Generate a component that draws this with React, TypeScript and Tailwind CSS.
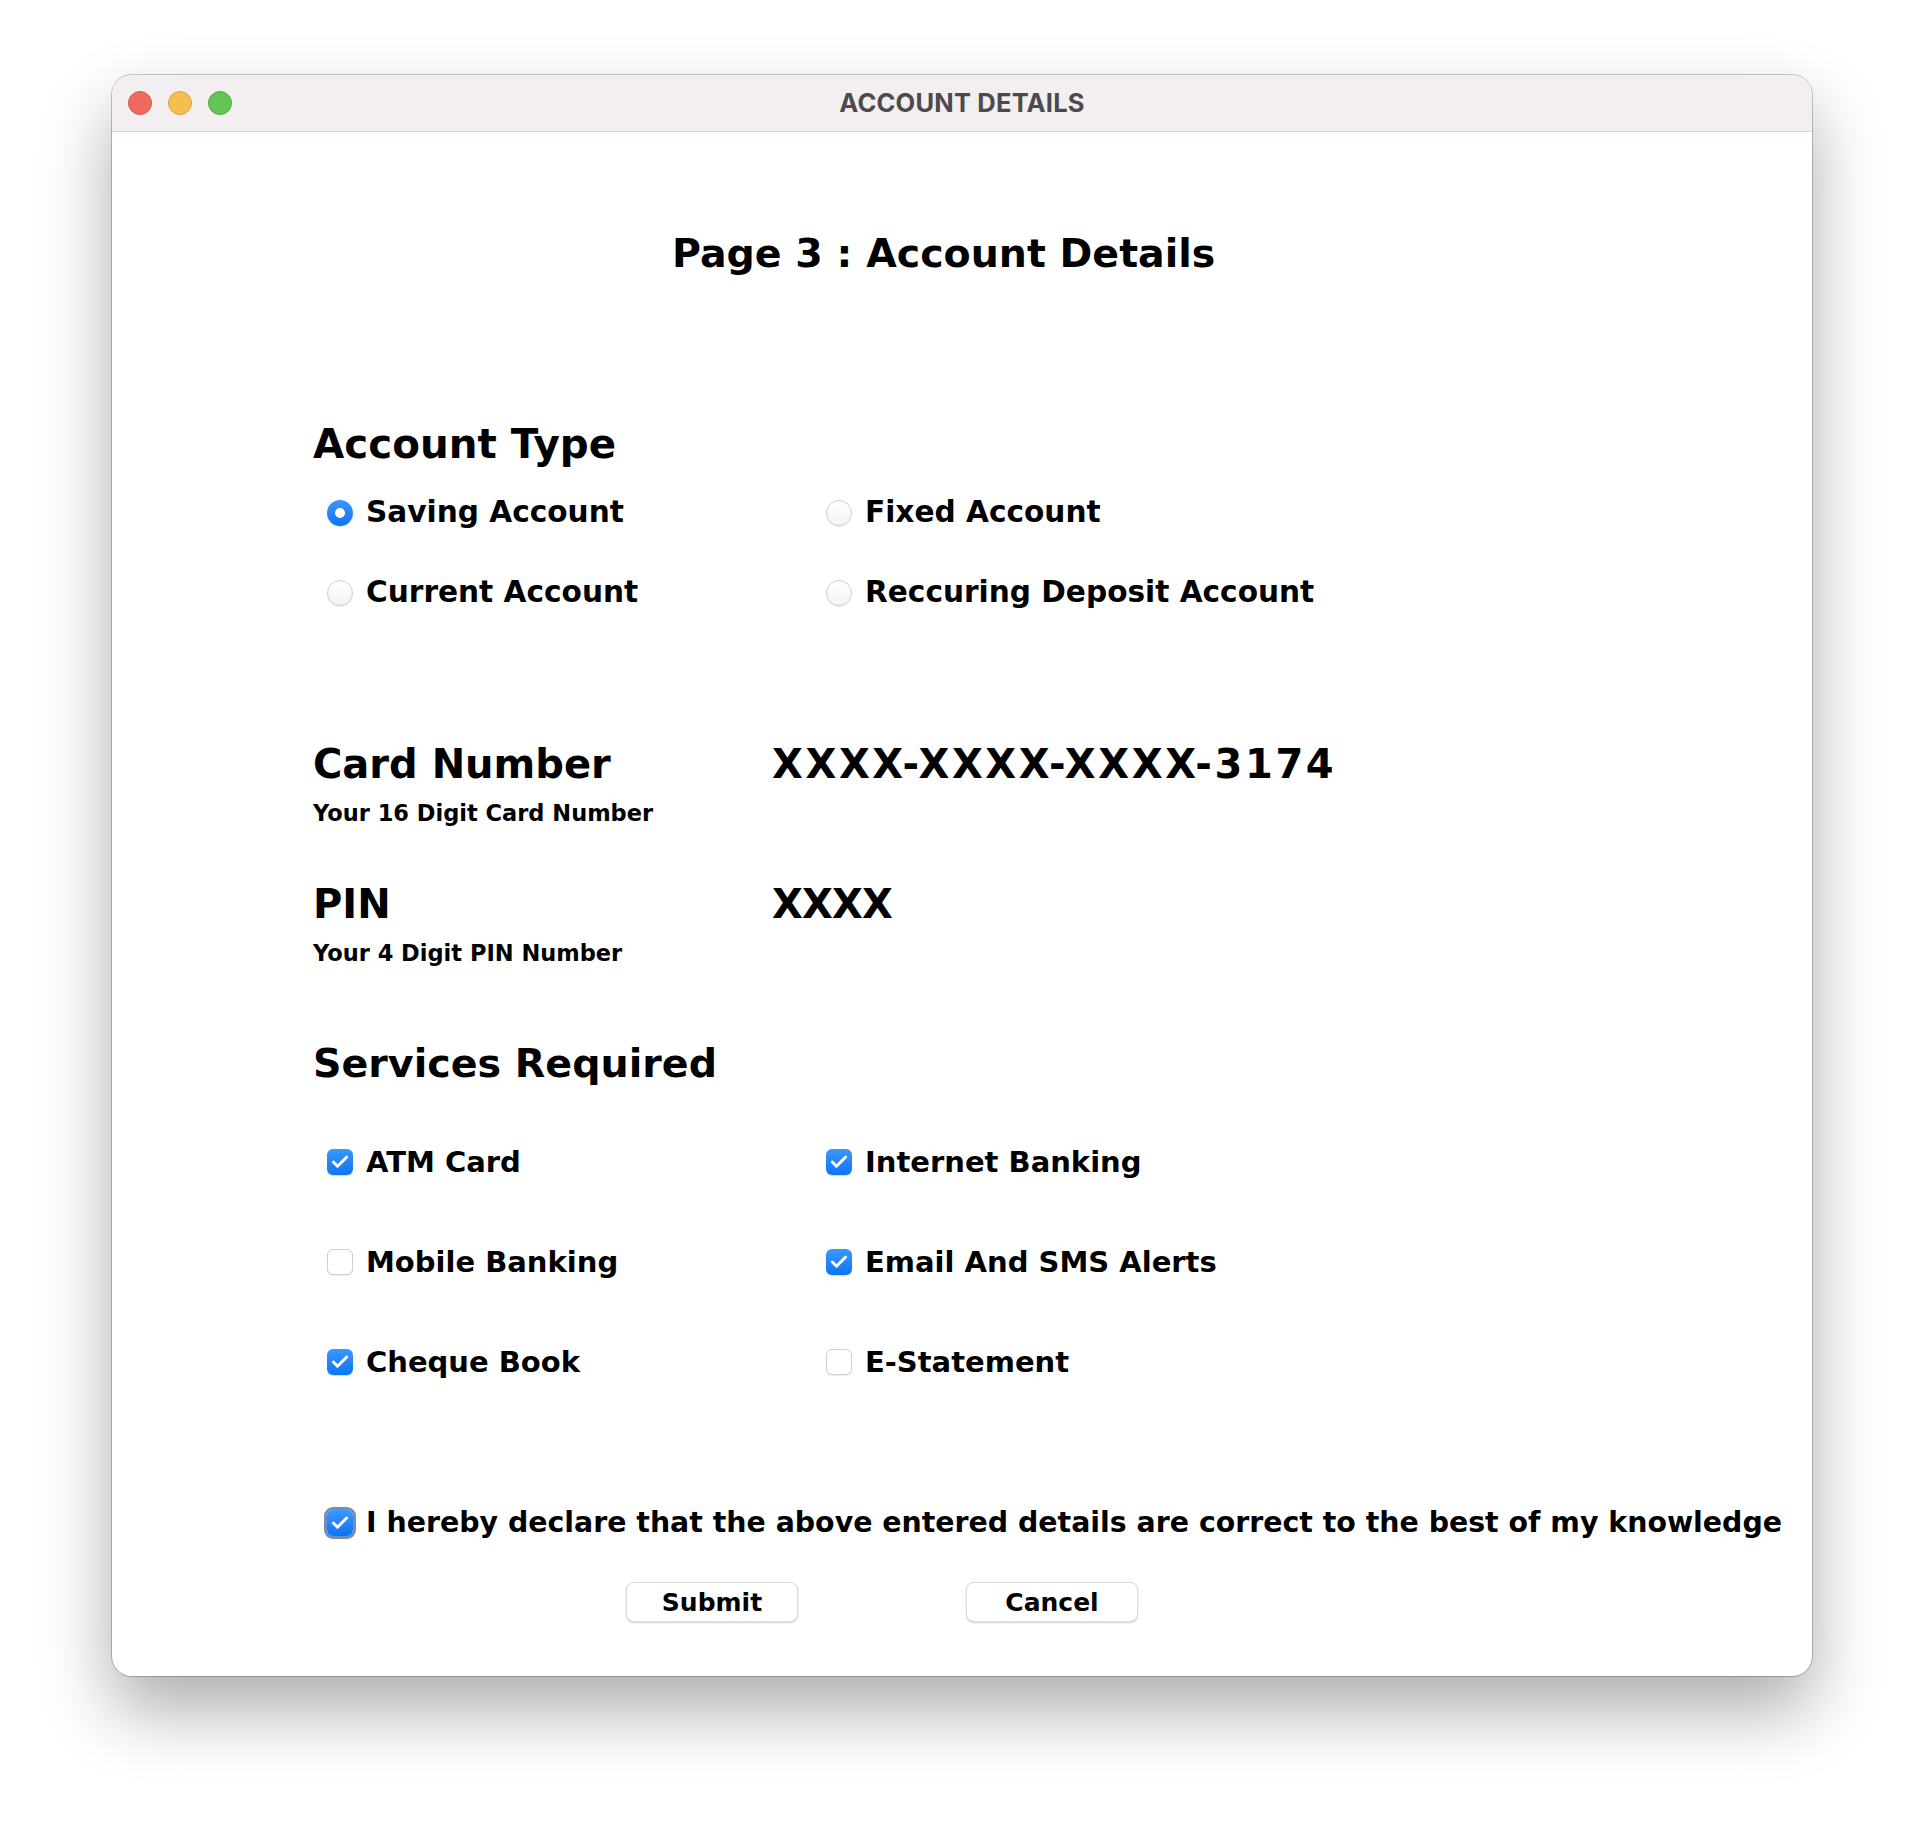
import { Check } from 'lucide-react';

const FONT = "font-['DejaVu_Sans',sans-serif]";

function Radio({ checked, label }: { checked?: boolean; label: string }) {
  return (
    <div className="flex items-center gap-[13px] h-[48px]">
      {checked ? (
        <div className="w-[26px] h-[26px] rounded-full bg-gradient-to-b from-[#3a97ff] to-[#0a74f5] flex items-center justify-center shadow-[0_1px_1px_rgba(0,0,0,0.15)]">
          <div className="w-[10px] h-[10px] rounded-full bg-white" />
        </div>
      ) : (
        <div className="w-[26px] h-[26px] rounded-full bg-gradient-to-b from-white to-[#f4f4f4] border border-[#cfcfcf] shadow-[0_1px_1px_rgba(0,0,0,0.08)]" />
      )}
      <span className="text-[29.6px] font-bold text-black leading-none">{label}</span>
    </div>
  );
}

function Box({ checked, focus, label, size }: { checked?: boolean; focus?: boolean; label: string; size?: string }) {
  return (
    <div className="flex items-center gap-[13px] h-[48px]">
      {checked ? (
        <div
          className={
            focus
              ? 'w-[26px] h-[26px] rounded-[6px] bg-gradient-to-b from-[#3a97ff] to-[#0a74f5] flex items-center justify-center ring-[3px] ring-[#6f8fb6]'
              : 'w-[26px] h-[26px] rounded-[6px] bg-gradient-to-b from-[#3a97ff] to-[#0a74f5] flex items-center justify-center shadow-[0_1px_1px_rgba(0,0,0,0.15)]'
          }
        >
          <Check size={20} strokeWidth={3.5} color="#ffffff" />
        </div>
      ) : (
        <div className="w-[26px] h-[26px] rounded-[6px] bg-white border border-[#cfcfcf] shadow-[0_1px_1px_rgba(0,0,0,0.08)]" />
      )}
      <span className={`${size ?? 'text-[29px]'} font-bold text-black leading-none whitespace-nowrap`}>{label}</span>
    </div>
  );
}

export default function App() {
  return (
    <div className="w-full h-[1824px] bg-white pt-[75px]">
      {/* Window */}
      <div className="mx-auto w-[1700px] h-[1601px] rounded-[20px] overflow-hidden bg-white shadow-[0_0_0_1px_rgba(0,0,0,0.22),0_34px_70px_rgba(0,0,0,0.33)]">
        {/* Title bar */}
        <div className="relative h-[57px] bg-[#f3eef0] border-b border-[#d9d5d7] flex items-center">
          <div className="flex items-center gap-[16px] pl-[16px]">
            <div className="w-[24px] h-[24px] rounded-full bg-[#ee6a5f] border border-[#d5574c]" />
            <div className="w-[24px] h-[24px] rounded-full bg-[#f5be4f] border border-[#d7a143]" />
            <div className="w-[24px] h-[24px] rounded-full bg-[#62c555] border border-[#51a843]" />
          </div>
          <div className="absolute inset-0 flex items-center justify-center">
            <span className="font-['Inter',sans-serif] font-bold text-[25.5px] text-[#4c4a4b] tracking-[0.2px]">
              ACCOUNT DETAILS
            </span>
          </div>
        </div>

        {/* Body */}
        <div className={`${FONT} text-black pl-[201px]`}>
          <div className="mt-[92px] h-[60px] flex items-center pl-[359px]">
            <h1 className="text-[39.5px] font-bold leading-none">Page 3 : Account Details</h1>
          </div>

          <div className="mt-[130px] h-[60px] flex items-center">
            <h2 className="text-[40.4px] font-bold leading-none">Account Type</h2>
          </div>

          <div className="ml-[14px] mt-[15px] grid grid-cols-[499px_auto] gap-y-[32px]">
            <Radio checked label="Saving Account" />
            <Radio label="Fixed Account" />
            <Radio label="Current Account" />
            <Radio label="Reccuring Deposit Account" />
          </div>

          <div className="mt-[117px] grid grid-cols-[459px_auto]">
            <div>
              <div className="h-[60px] flex items-center text-[40px] font-bold leading-none">Card Number</div>
              <div className="mt-[4px] h-[30px] flex items-center text-[22.5px] font-bold leading-none">
                Your 16 Digit Card Number
              </div>
            </div>
            <div className="h-[60px] flex items-center text-[40px] font-bold leading-none tracking-[2.6px]">
              XXXX-XXXX-XXXX-3174
            </div>
          </div>

          <div className="mt-[46px] grid grid-cols-[459px_auto]">
            <div>
              <div className="h-[60px] flex items-center text-[40px] font-bold leading-none">PIN</div>
              <div className="mt-[4px] h-[30px] flex items-center text-[22.5px] font-bold leading-none">
                Your 4 Digit PIN Number
              </div>
            </div>
            <div className="h-[60px] flex items-center text-[40px] font-bold leading-none tracking-[-0.8px]">XXXX</div>
          </div>

          <div className="mt-[66px] h-[60px] flex items-center">
            <h2 className="text-[39.6px] font-bold leading-none">Services Required</h2>
          </div>

          <div className="ml-[14px] mt-[44px] grid grid-cols-[499px_auto] gap-y-[52px]">
            <Box checked label="ATM Card" />
            <Box checked label="Internet Banking" />
            <Box label="Mobile Banking" />
            <Box checked label="Email And SMS Alerts" />
            <Box checked label="Cheque Book" />
            <Box label="E-Statement" />
          </div>

          <div className="ml-[14px] mt-[113px]">
            <Box
              checked
              focus
              size="text-[28.4px]"
              label="I hereby declare that the above entered details are correct to the best of my knowledge"
            />
          </div>

          <div className="mt-[35px] flex items-center gap-[168px] pl-[313px]">
            <button className="w-[172px] h-[40px] rounded-[8px] bg-white border border-[#dcdcdc] shadow-[0_1px_2px_rgba(0,0,0,0.18)] text-[25px] font-bold leading-none">
              Submit
            </button>
            <button className="w-[172px] h-[40px] rounded-[8px] bg-white border border-[#dcdcdc] shadow-[0_1px_2px_rgba(0,0,0,0.18)] text-[25px] font-bold leading-none">
              Cancel
            </button>
          </div>
        </div>
      </div>
    </div>
  );
}
